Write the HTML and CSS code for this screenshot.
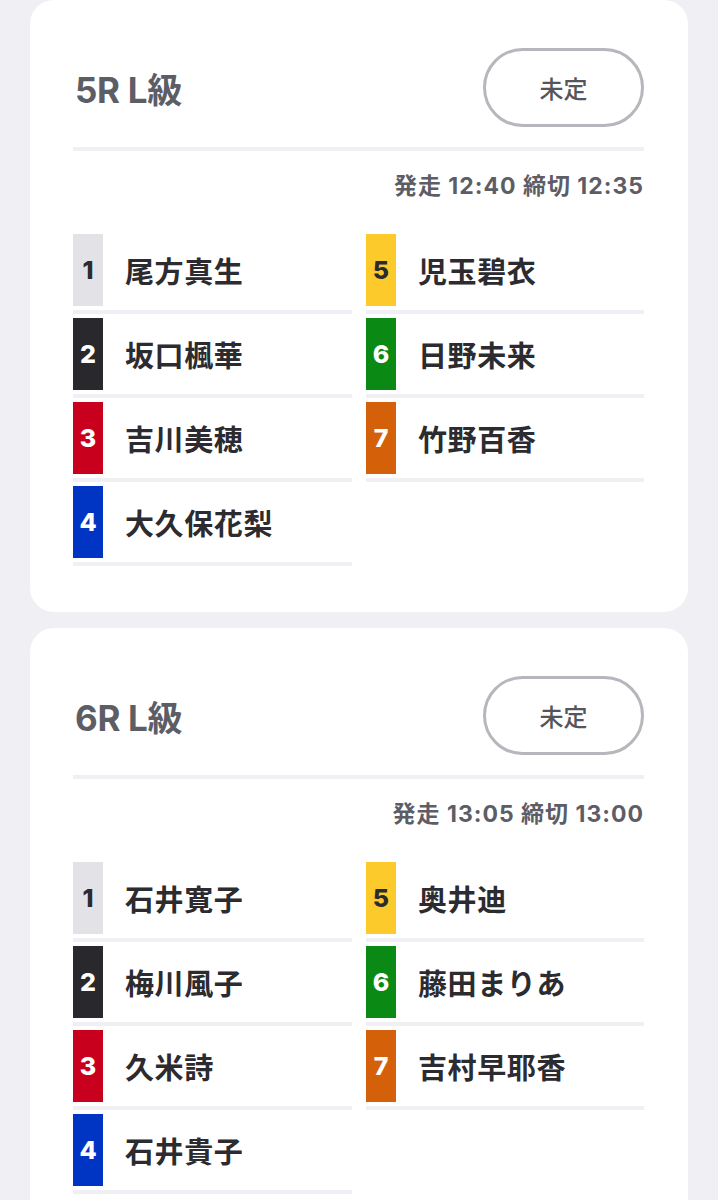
FILE: index.html
```html
<!DOCTYPE html>
<html lang="ja">
<head>
<meta charset="utf-8">
<title>レース一覧</title>
<link rel="stylesheet" href="styles.css">
</head>
<body>
<main class="page">
  <section class="card">
    <div class="card-head">
      <h2 class="race-title">5R L級</h2>
      <button class="status-btn">未定</button>
    </div>
    <div class="divider"></div>
    <p class="race-time">発走 12:40 締切 12:35</p>
    <ul class="entries">
      <li class="entry"><span class="num n1">1</span><span class="name">尾方真生</span></li>
      <li class="entry"><span class="num n2">2</span><span class="name">坂口楓華</span></li>
      <li class="entry"><span class="num n3">3</span><span class="name">吉川美穂</span></li>
      <li class="entry"><span class="num n4">4</span><span class="name">大久保花梨</span></li>
      <li class="entry"><span class="num n5">5</span><span class="name">児玉碧衣</span></li>
      <li class="entry"><span class="num n6">6</span><span class="name">日野未来</span></li>
      <li class="entry"><span class="num n7">7</span><span class="name">竹野百香</span></li>
    </ul>
  </section>
  <section class="card">
    <div class="card-head">
      <h2 class="race-title">6R L級</h2>
      <button class="status-btn">未定</button>
    </div>
    <div class="divider"></div>
    <p class="race-time">発走 13:05 締切 13:00</p>
    <ul class="entries">
      <li class="entry"><span class="num n1">1</span><span class="name">石井寛子</span></li>
      <li class="entry"><span class="num n2">2</span><span class="name">梅川風子</span></li>
      <li class="entry"><span class="num n3">3</span><span class="name">久米詩</span></li>
      <li class="entry"><span class="num n4">4</span><span class="name">石井貴子</span></li>
      <li class="entry"><span class="num n5">5</span><span class="name">奥井迪</span></li>
      <li class="entry"><span class="num n6">6</span><span class="name">藤田まりあ</span></li>
      <li class="entry"><span class="num n7">7</span><span class="name">吉村早耶香</span></li>
    </ul>
  </section>
</main>
</body>
</html>
```
FILE: styles.css
```css
html, body {
  margin: 0;
  padding: 0;
  background: #efeff4;
}
body {
  font-family: Inter, "Noto Sans CJK JP", sans-serif;
  color: #2b2b30;
}
.page {
  padding: 0 30px;
  display: flex;
  flex-direction: column;
  gap: 16px;
}
.card {
  background: #ffffff;
  border-radius: 24px;
  padding: 48px 44px 42px 43px;
}
.card-head {
  display: flex;
  align-items: center;
  justify-content: space-between;
}
.race-title {
  margin: 0 0 0 2px;
  font-size: 35px;
  font-weight: 700;
  color: #5d5d66;
  letter-spacing: -0.3px;
}
.status-btn {
  width: 161px;
  height: 79px;
  border: 3px solid #b6b6bc;
  border-radius: 40px;
  background: #ffffff;
  font-family: "Noto Sans CJK JP", sans-serif;
  font-size: 24px;
  font-weight: 500;
  color: #55555c;
  padding: 0;
}
.divider {
  height: 4px;
  background: #efeff4;
  margin-top: 20px;
}
.race-time {
  margin: 21px 0 34px;
  text-align: right;
  font-size: 23px;
  line-height: 28px;
  font-weight: 700;
  color: #5d5d66;
  letter-spacing: 1px;
}
.entries {
  list-style: none;
  margin: 0;
  padding: 0;
  display: grid;
  grid-template-columns: 279px 278px;
  grid-template-rows: repeat(4, auto);
  grid-auto-flow: column;
  column-gap: 14px;
}
.entry {
  display: flex;
  align-items: center;
  height: 72px;
  padding-bottom: 4px;
  border-bottom: 4px solid #efeff4;
  margin-bottom: 4px;
}
.num {
  width: 30px;
  height: 72px;
  display: flex;
  align-items: center;
  justify-content: center;
  font-size: 25px;
  font-weight: 800;
  color: #ffffff;
  flex: none;
}
.n1 { background: #e2e2e7; color: #2b2b30; }
.n2 { background: #28282d; }
.n3 { background: #c9001d; }
.n4 { background: #0034c2; }
.n5 { background: #fccb2b; color: #2b2b30; }
.n6 { background: #0a8a14; }
.n7 { background: #d5600a; }
.name {
  margin-left: 22px;
  font-family: "Noto Sans CJK JP", sans-serif;
  font-size: 29px;
  font-weight: 700;
  color: #2b2b30;
  letter-spacing: 0.6px;
}
```
